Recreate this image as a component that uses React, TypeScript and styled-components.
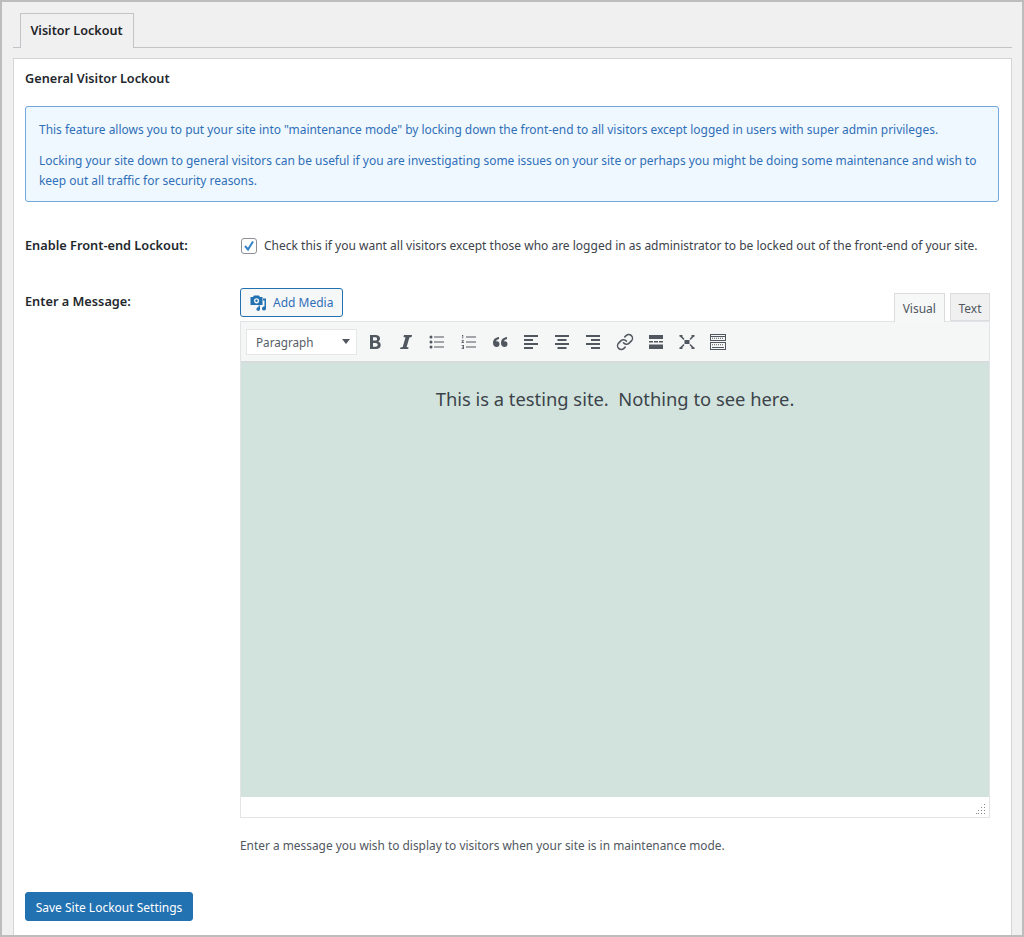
import { createGlobalStyle, styled } from "styled-components"
import { Link } from "lucide-react"

const GlobalStyle = createGlobalStyle`
  html, body { margin: 0; padding: 0; }
  body {
    font-family: "Noto Sans", "Open Sans", sans-serif;
    font-size: 12px;
    color: #3c434a;
    background: #f0f0f1;
  }
`

const Page = styled.div`
  box-sizing: border-box;
  width: 1024px;
  height: 937px;
  padding: 11px 10px 0 11px;
  border: 2px solid #bdbdbd;
  overflow: hidden;
  background: #f0f0f1;
`

const TabBar = styled.div`
  display: flex;
  padding-left: 7px;
  height: 34px;
  border-bottom: 1px solid #c3c4c7;
`

const Tab = styled.div`
  box-sizing: border-box;
  width: 114px;
  height: 35px;
  padding-top: 8px;
  padding-right: 1px;
  text-align: center;
  font-size: 12.6px;
  font-weight: 600;
  color: #1d2327;
  background: #f0f0f1;
  border: 1px solid #c3c4c7;
  border-bottom: 0;
`

const Panel = styled.div`
  box-sizing: border-box;
  height: 878px;
  margin-top: 10px;
  padding: 11px 12px 0 11px;
  background: #fff;
  border: 1px solid #d4d4d4;
  border-bottom: 0;
`

const Heading = styled.h2`
  margin: 0;
  font-size: 12.7px;
  line-height: 16px;
  font-weight: 600;
  color: #23282d;
`

const Notice = styled.div`
  box-sizing: border-box;
  height: 96px;
  margin-top: 20px;
  padding: 13px 13px 0;
  background: #f0f8ff;
  border: 1px solid #72a5d8;
  border-radius: 3px;
  color: #2f6fb8;
  font-size: 11.95px;
  line-height: 20px;
`

const NoticeText = styled.p`
  margin: 0 0 11px;
`

const Row = styled.div<{ $top: number }>`
  display: grid;
  grid-template-columns: 215px 750px;
  margin-top: ${(p) => p.$top}px;
`

const Label = styled.div<{ $offset?: number }>`
  padding-top: ${(p) => p.$offset ?? 0}px;
  font-size: 12.75px;
  line-height: 19px;
  font-weight: 600;
  color: #23282d;
`

const CheckRow = styled.div`
  display: flex;
  align-items: flex-start;
  gap: 7px;
  padding-left: 1px;
  line-height: 20px;
`

const CheckBox = styled.span`
  box-sizing: border-box;
  flex: none;
  display: flex;
  align-items: center;
  justify-content: center;
  width: 16px;
  height: 16px;
  margin-top: 2px;
  background: #fff;
  border: 1px solid #8c8f94;
  border-radius: 3px;
  color: #3582c4;
`

const EditorTools = styled.div`
  display: flex;
  justify-content: space-between;
  align-items: flex-end;
  height: 33px;
`

const MediaButton = styled.button`
  box-sizing: border-box;
  display: flex;
  align-items: center;
  gap: 5px;
  align-self: flex-start;
  width: 103px;
  height: 29px;
  padding: 0 0 0 9px;
  background: #f6f7f7;
  border: 1px solid #2271b1;
  border-radius: 3px;
  color: #2f6fb8;
  font: inherit;
  font-size: 12px;
`

const ModeTabs = styled.div`
  display: flex;
  gap: 5px;
  margin-bottom: -1px;
  position: relative;
`

const ModeTab = styled.div<{ $active?: boolean }>`
  box-sizing: border-box;
  height: ${(p) => (p.$active ? 29 : 28)}px;
  padding: 0 ${(p) => (p.$active ? 8 : 7.5)}px;
  line-height: 30px;
  font-size: 12px;
  color: #50575e;
  background: ${(p) => (p.$active ? "#f6f7f7" : "#f0f0f1")};
  border: 1px solid #dcdcde;
  border-bottom: ${(p) => (p.$active ? "0" : "1px solid #dcdcde")};
`

const EditorBox = styled.div`
  border: 1px solid #e2e4e7;
`

const Toolbar = styled.div`
  display: flex;
  align-items: center;
  height: 39px;
  padding-left: 5px;
  background: #f5f6f6;
  border-bottom: 2px solid #d8dbdc;
`

const FormatSelect = styled.div`
  box-sizing: border-box;
  display: flex;
  align-items: center;
  justify-content: space-between;
  width: 111px;
  height: 26px;
  padding: 0 6px 0 9px;
  margin-right: 2.5px;
  background: #fff;
  border: 1px solid #e6e6e6;
  color: #555d66;
  font-size: 11.7px;
`

const Caret = styled.span`
  width: 0;
  height: 0;
  border-left: 4px solid transparent;
  border-right: 4px solid transparent;
  border-top: 5px solid #50575e;
`

const ToolIcon = styled.svg`
  display: block;
  flex: none;
  width: 20px;
  height: 20px;
  margin: 0 5.6px;
  fill: #50575e;
`

const LinkWrap = styled.span`
  display: flex;
  flex: none;
  width: 20px;
  justify-content: center;
  margin: 0 5.6px;
  color: #50575e;
`

const Content = styled.div`
  height: 434px;
  padding-top: 22px;
  box-sizing: border-box;
  background: #d2e3dd;
  color: #3c434a;
  font-size: 18.35px;
  line-height: 28px;
  text-align: center;
  white-space: pre-wrap;
`

const StatusBar = styled.div`
  display: flex;
  justify-content: flex-end;
  align-items: flex-end;
  height: 20px;
  padding: 0 3px 3px 0;
  box-sizing: border-box;
  background: #fff;
`

const Help = styled.p`
  margin: 17px 0 0;
  font-size: 11.9px;
  line-height: 20px;
  color: #50575e;
`

const SaveButton = styled.button`
  display: block;
  width: 168px;
  height: 29px;
  margin-top: 37px;
  padding: 1px 0 0;
  background: #2271b1;
  border: 1px solid #2271b1;
  border-radius: 3px;
  color: #fff;
  font: inherit;
  font-size: 12px;
`

function MediaIcon() {
  return (
    <svg width="18" height="18" viewBox="0 0 18 18" fill="#2271b1">
      <path
        fillRule="evenodd"
        d="M0.500 3h2.500l1-1.500h5L10 3h2.500v8H.500zM6.500 4.200a2.600 2.600 0 1 0 0 5.200 2.600 2.600 0 0 0 0-5.200z"
      />
      <circle cx="6.500" cy="6.800" r="1.200" />
      <path d="M13 4.500h3v10a2 2 0 1 1-1.500-1.900V6.500H13z" />
      <path d="M10 11.500v3.500a1.800 1.800 0 1 1-1.500-1.700v-1.800z" />
    </svg>
  )
}

const icons: Record<string, React.ReactNode> = {
  bold: (
    <path
      fillRule="evenodd"
      d="M5 3h5.500C13.300 3 15 4.300 15 6.500c0 1.400-.7 2.500-1.900 3 1.600.4 2.600 1.700 2.600 3.500 0 2.500-1.800 4-4.700 4H5zm3 2.300v3.300h2.200c1.200 0 1.900-.6 1.900-1.700s-.7-1.600-1.900-1.600zm0 5.600v3.800h2.600c1.300 0 2.100-.7 2.100-1.900s-.8-1.900-2.100-1.900z"
    />
  ),
  italic: <path d="M8 3h8l-.4 2-2.200.4L10.600 15l2 .4-.4 1.600H4l.4-1.600 2.300-.4 2.800-9.600-2-.4z" />,
  bullist: (
    <>
      <circle cx="4" cy="5" r="1.500" />
      <circle cx="4" cy="10" r="1.500" />
      <circle cx="4" cy="15" r="1.500" />
      <rect x="7" y="4.500" width="10" height="1" />
      <rect x="7" y="9.500" width="10" height="1" />
      <rect x="7" y="14.500" width="10" height="1" />
    </>
  ),
  numlist: (
    <>
      <path d="M3 3h1.200v3.500H3.400V4H3zM2.600 8.200h2.300V9L3.600 10.200h1.400v.8H2.500v-.7l1.400-1.300H2.600zM2.600 13h2.400v4H2.600v-.7h1.600v-.9H3v-.6h1.200v-1H2.600z" />
      <rect x="7" y="4.500" width="10" height="1" />
      <rect x="7" y="9.500" width="10" height="1" />
      <rect x="7" y="14.500" width="10" height="1" />
    </>
  ),
  quote: <path d="M9 5v2c-2 .4-3 1.400-3 2.500.3-.2.700-.3 1.200-.3C8.500 9.200 9.500 10.300 9.500 12s-1.100 3-2.900 3C4.500 15 3 13.400 3 11c0-3.400 2.300-5.600 6-6zm8 0v2c-2 .4-3 1.400-3 2.500.3-.2.700-.3 1.200-.3 1.300 0 2.300 1.100 2.300 2.800s-1.100 3-2.900 3c-2.100 0-3.600-1.600-3.600-4 0-3.400 2.300-5.600 6-6z" />,
  left: (
    <>
      <rect x="3" y="3" width="14" height="2" />
      <rect x="3" y="7" width="9" height="2" />
      <rect x="3" y="11" width="14" height="2" />
      <rect x="3" y="15" width="9" height="2" />
    </>
  ),
  center: (
    <>
      <rect x="3" y="3" width="14" height="2" />
      <rect x="5.500" y="7" width="9" height="2" />
      <rect x="3" y="11" width="14" height="2" />
      <rect x="5.500" y="15" width="9" height="2" />
    </>
  ),
  right: (
    <>
      <rect x="3" y="3" width="14" height="2" />
      <rect x="8" y="7" width="9" height="2" />
      <rect x="3" y="11" width="14" height="2" />
      <rect x="8" y="15" width="9" height="2" />
    </>
  ),
  more: (
    <>
      <rect x="3" y="3" width="14" height="4" />
      <rect x="3" y="9" width="4" height="1.500" />
      <rect x="8" y="9" width="4" height="1.500" />
      <rect x="13" y="9" width="4" height="1.500" />
      <rect x="3" y="12.500" width="14" height="4.500" />
    </>
  ),
  fullscreen: (
    <>
      <rect x="7.500" y="8" width="5" height="4" />
      <path d="M2.500 4l1.500-1 3.500 4-1 1zM17.500 4L16 3l-3.500 4 1 1zM2.500 16l1.500 1 3.500-4-1-1zM17.500 16L16 17l-3.500-4 1-1z" />
      <path d="M2.500 3h3v1.500h-3zM14.500 3h3v1.500h-3zM2.500 15.500h3V17h-3zM14.500 15.500h3V17h-3z" />
    </>
  ),
  kitchen: (
    <path
      fillRule="evenodd"
      d="M2 2h16v7H2zm1 1v1h14V3zm0 2v3h14V5zm1 .8h1v1H4zm2 0h1v1H6zm2 0h1v1H8zm2 0h1v1h-1zm2 0h1v1h-1zm2 0h1v1h-1zM2 10h16v8H2zm1 1v6h14v-6zm1 1.200h1v1H4zm2 0h1v1H6zm2 0h1v1H8zm2 0h1v1h-1zm2 0h1v1h-1zm2 0h1v1h-1zM4 15h12v1H4z"
    />
  ),
}

function Tool({ name }: { name: string }) {
  return <ToolIcon viewBox="0 0 20 20">{icons[name]}</ToolIcon>
}

function ResizeGrip() {
  const dots = [
    [8, 0],
    [8, 3],
    [5, 3],
    [8, 6],
    [5, 6],
    [2, 6],
    [8, 9],
    [5, 9],
    [2, 9],
    [0, 9],
  ]
  return (
    <svg width="10" height="10" viewBox="0 0 10 10" fill="#82878c">
      {dots.map(([x, y]) => (
        <rect key={`${x}-${y}`} x={x} y={y} width="1" height="1" />
      ))}
    </svg>
  )
}

export default function App() {
  return (
    <Page>
      <GlobalStyle />
      <TabBar>
        <Tab>Visitor Lockout</Tab>
      </TabBar>
      <Panel>
        <Heading>General Visitor Lockout</Heading>
        <Notice>
          <NoticeText>
            This feature allows you to put your site into "maintenance mode" by locking down the
            front-end to all visitors except logged in users with super admin privileges.
          </NoticeText>
          <NoticeText>
            Locking your site down to general visitors can be useful if you are investigating some
            issues on your site or perhaps you might be doing some maintenance and wish to keep out
            all traffic for security reasons.
          </NoticeText>
        </Notice>
        <Row $top={34}>
          <Label>Enable Front-end Lockout:</Label>
          <CheckRow>
            <CheckBox>
              <svg width="12" height="12" viewBox="0 0 12 12" fill="none" stroke="currentColor" strokeWidth="2">
                <path d="M2 6l3 3.500L10 1.500" />
              </svg>
            </CheckBox>
            <span>
              Check this if you want all visitors except those who are logged in as administrator to
              be locked out of the front-end of your site.
            </span>
          </CheckRow>
        </Row>
        <Row $top={32}>
          <Label $offset={4}>Enter a Message:</Label>
          <div>
            <EditorTools>
              <MediaButton>
                <MediaIcon />
                Add Media
              </MediaButton>
              <ModeTabs>
                <ModeTab $active>Visual</ModeTab>
                <ModeTab>Text</ModeTab>
              </ModeTabs>
            </EditorTools>
            <EditorBox>
              <Toolbar>
                <FormatSelect>
                  Paragraph
                  <Caret />
                </FormatSelect>
                <Tool name="bold" />
                <Tool name="italic" />
                <Tool name="bullist" />
                <Tool name="numlist" />
                <Tool name="quote" />
                <Tool name="left" />
                <Tool name="center" />
                <Tool name="right" />
                <LinkWrap>
                  <Link size={18} strokeWidth={2} />
                </LinkWrap>
                <Tool name="more" />
                <Tool name="fullscreen" />
                <Tool name="kitchen" />
              </Toolbar>
              <Content>This is a testing site.  Nothing to see here.</Content>
              <StatusBar>
                <ResizeGrip />
              </StatusBar>
            </EditorBox>
            <Help>Enter a message you wish to display to visitors when your site is in maintenance mode.</Help>
          </div>
        </Row>
        <SaveButton>Save Site Lockout Settings</SaveButton>
      </Panel>
    </Page>
  )
}
